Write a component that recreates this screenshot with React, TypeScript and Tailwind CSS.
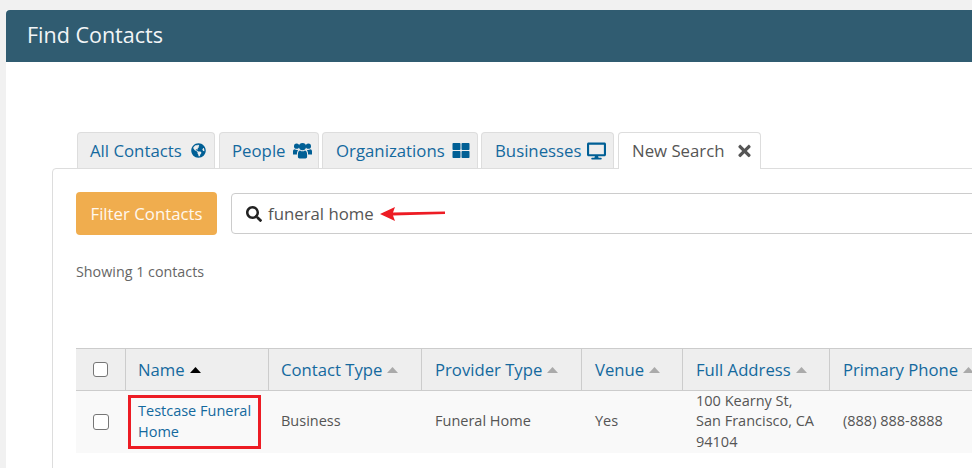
import { FaDesktop, FaGlobeAmericas, FaSearch, FaThLarge, FaTimes } from "react-icons/fa";
import type { ReactNode } from "react";

type TabItem = {
  label: string;
  icon: ReactNode;
  className: string;
};

function UsersIcon() {
  return (
    <svg viewBox="0 0 19 17" className="h-[17px] w-[19px]" fill="#005f95" aria-hidden>
      <circle cx="3.6" cy="4.2" r="2.6" />
      <circle cx="15.4" cy="4.2" r="2.6" />
      <circle cx="9.5" cy="4.6" r="3.6" />
      <path d="M0 12.4V9.6C0 8 .8 7.4 1.8 7.3c.8.8 2.5 1 3.6.5-.9 1-1.5 2.5-1.5 4.6H1.2C.5 12.4 0 12.4 0 12.4Z" />
      <path d="M19 12.4V9.6c0-1.6-.8-2.2-1.8-2.3-.8.8-2.5 1-3.6.5.9 1 1.5 2.5 1.5 4.6h2.7c.7 0 1.2 0 1.2 0Z" />
      <path d="M4.9 14.8v-2.6c0-2.3 1-3.6 2.2-3.8 1.2 1.2 3.6 1.2 4.8 0 1.2.2 2.2 1.5 2.2 3.8v2.6c0 1-.7 1.6-1.7 1.6H6.6c-1 0-1.7-.6-1.7-1.6Z" />
    </svg>
  );
}

const tabs: TabItem[] = [
  { label: "All Contacts", icon: <FaGlobeAmericas className="h-[15px] w-[15px] text-[#005f95]" aria-hidden />, className: "w-[138px] mr-px pl-[12px] gap-[9px]" },
  { label: "People", icon: <UsersIcon />, className: "w-[100px] pl-[12px] gap-[7px]" },
  { label: "Organizations", icon: <FaThLarge className="h-[17px] w-[18px] text-[#005f95]" aria-hidden />, className: "w-[156px] pl-[13px] gap-[7px]" },
  { label: "Businesses", icon: <FaDesktop className="h-[18px] w-[19px] text-[#005f95]" aria-hidden />, className: "w-[133px] pl-[13px] gap-[5px]" },
];

const columns = [
  { label: "Contact Type", width: "w-[153px] pl-[12px]" },
  { label: "Provider Type", width: "w-[160px] pl-[13px]" },
  { label: "Venue", width: "w-[101px] pl-[13px]" },
  { label: "Full Address", width: "w-[147px] pl-[13px]" },
  { label: "Primary Phone", width: "w-[160px] pl-[13px]" },
];

function SortCaret({ active = false }: { active?: boolean }) {
  return (
    <svg viewBox="0 0 11 6" className="ml-[5px] inline-block h-[6px] w-[11px] shrink-0" aria-hidden>
      <path d="M0 6 L5.5 0 L11 6 Z" fill={active ? "#000000" : "#aaaaaa"} />
    </svg>
  );
}

function Checkbox({ large = false }: { large?: boolean }) {
  return (
    <span
      className={`block rounded-[3px] border-[1.5px] border-[#767676] bg-white ${large ? "h-[16px] w-[16px]" : "h-[15px] w-[15px]"}`}
    />
  );
}

export default function App() {
  return (
    <div className="h-[468px] w-[972px] overflow-hidden bg-[#f1f1f1] pl-[6px] pt-[10px] font-['Open_Sans',sans-serif] text-[14px] text-[#555555]">
      <div className="relative h-[458px] w-[1100px] bg-white">
        <div className="flex h-[52px] items-center rounded-t-[4px] bg-[#305c71] pb-[2px] pl-[21px] text-[21.5px] text-[#f2f5f7]">
          Find Contacts
        </div>

        <div className="pl-[46px] pt-[70px]">
          <div className="relative z-10 flex gap-[3px] pl-[25px]">
            {tabs.map((tab) => (
              <div
                key={tab.label}
                className={`flex h-[36px] shrink-0 items-center rounded-t-[4px] border border-b-0 border-[#dddddd] bg-[#eeeeee] text-[16.8px] text-[#14699e] ${tab.className}`}
              >
                {tab.label}
                {tab.icon}
              </div>
            ))}
            <div className="-mb-px ml-px flex h-[37px] w-[143px] shrink-0 items-center gap-[13px] rounded-t-[4px] border border-b-0 border-[#dddddd] bg-white pl-[13px] text-[16.8px] text-[#555555]">
              New Search
              <FaTimes className="h-[18px] w-[13px] text-[#555555]" aria-hidden />
            </div>
          </div>

          <div className="h-[320px] rounded-tl-[4px] border border-[#dddddd] pl-[23px] pt-[23px]">
            <div className="flex items-center gap-[14px]">
              <div className="flex h-[43px] w-[141px] shrink-0 items-center justify-center rounded-[4px] bg-[#f0ad4e] text-[16.8px] text-[#fff8ee]">
                Filter Contacts
              </div>
              <div className="relative flex h-[41px] w-[800px] shrink-0 items-center rounded-[4px] border border-[#cccccc] pl-[14px] text-[16.8px] text-[#555555]">
                <FaSearch className="mr-[6px] h-[16px] w-[16px] text-[#222222]" aria-hidden />
                funeral home
                <svg viewBox="0 0 66 14" className="absolute left-[148px] top-[13px] h-[14px] w-[66px]" aria-hidden>
                  <path d="M0 7 L15 0 L13 5.5 L65 4.5 L65 7 L13 8.5 L15 14 Z" fill="#ed1c24" />
                </svg>
              </div>
            </div>

            <p className="mt-[27px] text-[14.3px] leading-[20px] text-[#666666]">Showing 1 contacts</p>

            <div className="mt-[66px] w-[1000px]">
              <div className="flex h-[43px] border-y border-[#cccccc] bg-[#eeeeee] text-[16.7px] text-[#14699e]">
                <div className="flex w-[50px] shrink-0 items-center justify-center border-r border-[#cccccc]">
                  <Checkbox />
                </div>
                <div className="flex w-[143px] shrink-0 items-center border-r border-[#cccccc] pl-[12px]">
                  Name
                  <SortCaret active />
                </div>
                {columns.map((col) => (
                  <div key={col.label} className={`flex shrink-0 items-center border-r border-[#cccccc] ${col.width}`}>
                    {col.label}
                    <SortCaret />
                  </div>
                ))}
              </div>

              <div className="flex h-[62px] items-center bg-[#f9f9f9] pb-[1px] text-[14.5px] leading-[20.5px] text-[#555555]">
                <div className="flex w-[50px] shrink-0 justify-center">
                  <Checkbox large />
                </div>
                <div className="relative w-[143px] shrink-0 pl-[12px] text-[#14699e]">
                  Testcase Funeral
                  <br />
                  Home
                  <div className="absolute left-[2px] top-[-6px] h-[54px] w-[133px] border-[3px] border-[#ed1c24]" />
                </div>
                <div className="w-[153px] shrink-0 pl-[12px]">Business</div>
                <div className="w-[160px] shrink-0 pl-[13px]">Funeral Home</div>
                <div className="w-[101px] shrink-0 pl-[13px]">Yes</div>
                <div className="w-[147px] shrink-0 pl-[13px]">
                  100 Kearny St,
                  <br />
                  San Francisco, CA
                  <br />
                  94104
                </div>
                <div className="w-[160px] shrink-0 pl-[13px]">(888) 888-8888</div>
              </div>
            </div>
          </div>
        </div>
      </div>
    </div>
  );
}
